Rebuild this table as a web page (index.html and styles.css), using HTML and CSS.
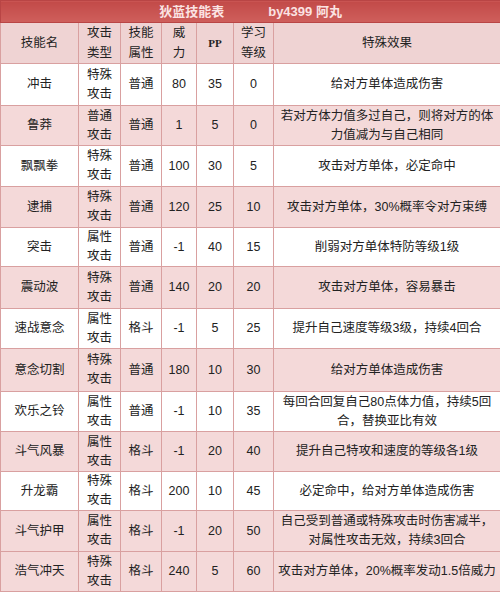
FILE: index.html
```html
<!DOCTYPE html>
<html lang="zh">
<head>
<meta charset="utf-8">
<title>狄蓝技能表</title>
<link rel="stylesheet" href="styles.css">
</head>
<body>
<table class="skills">
  <colgroup>
    <col class="c-name"><col class="c-type"><col class="c-attr"><col class="c-pow"><col class="c-pp"><col class="c-lv"><col class="c-eff">
  </colgroup>
  <thead>
    <tr class="title-row"><th colspan="7"><span class="t-main">狄蓝技能表</span><span class="t-by">by4399 阿丸</span></th></tr>
    <tr class="head-row">
      <th>技能名</th><th>攻击<br>类型</th><th>技能<br>属性</th><th>威<br>力</th><th class="pp">PP</th><th>学习<br>等级</th><th>特殊效果</th>
    </tr>
  </thead>
  <tbody>
    <tr class="w"><td>冲击</td><td>特殊<br>攻击</td><td>普通</td><td>80</td><td>35</td><td>0</td><td class="eff">给对方单体造成伤害</td></tr>
    <tr class="p"><td>鲁莽</td><td>普通<br>攻击</td><td>普通</td><td>1</td><td>5</td><td>0</td><td class="eff">若对方体力值多过自己，则将对方的体<br>力值减为与自己相同</td></tr>
    <tr class="w"><td>飘飘拳</td><td>特殊<br>攻击</td><td>普通</td><td>100</td><td>30</td><td>5</td><td class="eff">攻击对方单体，必定命中</td></tr>
    <tr class="p"><td>逮捕</td><td>特殊<br>攻击</td><td>普通</td><td>120</td><td>25</td><td>10</td><td class="eff">攻击对方单体，30%概率令对方束缚</td></tr>
    <tr class="w"><td>突击</td><td>属性<br>攻击</td><td>普通</td><td>-1</td><td>40</td><td>15</td><td class="eff">削弱对方单体特防等级1级</td></tr>
    <tr class="p"><td>震动波</td><td>特殊<br>攻击</td><td>普通</td><td>140</td><td>20</td><td>20</td><td class="eff">攻击对方单体，容易暴击</td></tr>
    <tr class="w"><td>速战意念</td><td>属性<br>攻击</td><td>格斗</td><td>-1</td><td>5</td><td>25</td><td class="eff">提升自己速度等级3级，持续4回合</td></tr>
    <tr class="p"><td>意念切割</td><td>特殊<br>攻击</td><td>普通</td><td>180</td><td>10</td><td>30</td><td class="eff">给对方单体造成伤害</td></tr>
    <tr class="w"><td>欢乐之铃</td><td>属性<br>攻击</td><td>普通</td><td>-1</td><td>10</td><td>35</td><td class="eff">每回合回复自己80点体力值，持续5回<br>合，替换亚比有效</td></tr>
    <tr class="p"><td>斗气风暴</td><td>属性<br>攻击</td><td>格斗</td><td>-1</td><td>20</td><td>40</td><td class="eff">提升自己特攻和速度的等级各1级</td></tr>
    <tr class="w"><td>升龙霸</td><td>特殊<br>攻击</td><td>格斗</td><td>200</td><td>10</td><td>45</td><td class="eff">必定命中，给对方单体造成伤害</td></tr>
    <tr class="p"><td>斗气护甲</td><td>属性<br>攻击</td><td>格斗</td><td>-1</td><td>20</td><td>50</td><td class="eff">自己受到普通或特殊攻击时伤害减半，<br>对属性攻击无效，持续3回合</td></tr>
    <tr class="p"><td>浩气冲天</td><td>特殊<br>攻击</td><td>格斗</td><td>240</td><td>5</td><td>60</td><td class="eff">攻击对方单体，20%概率发动1.5倍威力</td></tr>
  </tbody>
</table>
</body>
</html>
```
FILE: styles.css
```css
html, body {
  margin: 0;
  padding: 0;
  background: #ffffff;
}

.skills {
  width: 500px;
  border-collapse: collapse;
  table-layout: fixed;
  font-family: "Liberation Sans", "Noto Sans CJK SC", sans-serif;
  font-size: 12.5px;
  line-height: 19px;
  color: #222222;
  border: 1px solid #c77b7b;
}

.c-name { width: 78px; }
.c-type { width: 42px; }
.c-attr { width: 41px; }
.c-pow { width: 35px; }
.c-pp { width: 37px; }
.c-lv { width: 40px; }
.c-eff { width: 227px; }

.skills th,
.skills td {
  border: 1px solid #d9a0a0;
  text-align: center;
  vertical-align: middle;
  padding: 0;
  font-weight: normal;
}

.title-row th {
  height: 21px;
  background: linear-gradient(#c24a48, #cf5f5c);
  color: #fbe3e3;
  font-weight: bold;
  font-size: 13px;
  line-height: 21px;
  border-color: #b94545;
  white-space: nowrap;
}

.t-main {
  margin-right: 44px;
}

.head-row th {
  height: 39px;
  line-height: 20px;
  background: #efd3d3;
}

.head-row .pp {
  font-family: "Liberation Serif", "DejaVu Serif", serif;
  font-weight: bold;
  font-size: 11px;
}

.skills tbody td {
  height: 40px;
}

.skills tbody tr:nth-child(2) td,
.skills tbody tr:nth-child(7) td,
.skills tbody tr:nth-child(9) td,
.skills tbody tr:nth-child(10) td,
.skills tbody tr:nth-child(13) td {
  height: 39px;
}

.skills tbody tr:nth-child(5) td,
.skills tbody tr:nth-child(11) td {
  height: 38px;
}

.skills tbody tr:nth-child(1) td,
.skills tbody tr:nth-child(6) td {
  height: 41px;
}

.skills tbody tr:nth-child(8) td {
  height: 42px;
}

.skills tr.w td {
  background: #ffffff;
}

.skills tr.p td {
  background: #f4d9d9;
}

.skills td.eff {
  white-space: nowrap;
  padding: 0 2px;
}
```
